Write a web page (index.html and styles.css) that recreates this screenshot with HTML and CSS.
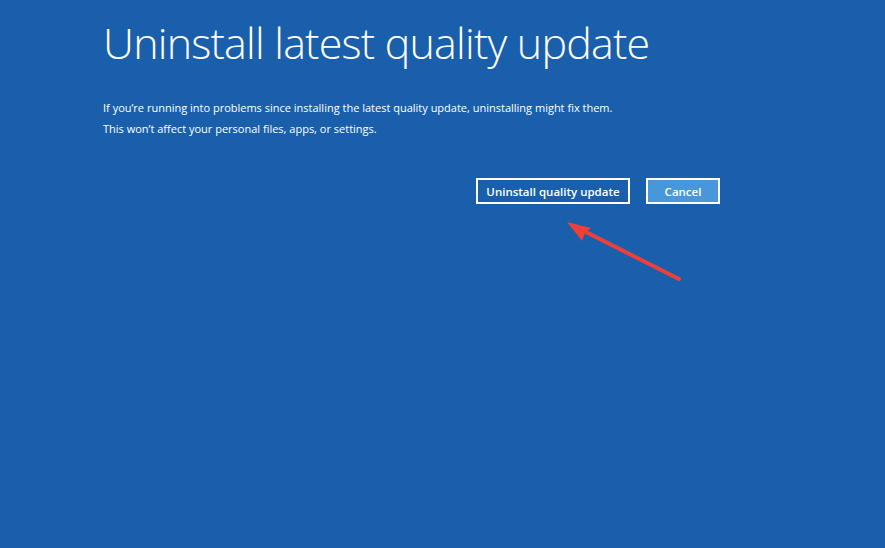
FILE: index.html
```html
<!DOCTYPE html>
<html lang="en">
<head>
<meta charset="utf-8">
<title>Uninstall latest quality update</title>
<link rel="stylesheet" href="styles.css">
</head>
<body>
<main class="page">
  <h1 class="title">Uninstall latest quality update</h1>
  <div class="desc">
    <p>If you’re running into problems since installing the latest quality update, uninstalling might fix them.</p>
    <p>This won’t affect your personal files, apps, or settings.</p>
  </div>
  <div class="actions">
    <button class="btn btn-primary">Uninstall quality update</button>
    <button class="btn btn-cancel">Cancel</button>
  </div>
</main>
<svg class="arrow" width="885" height="548" viewBox="0 0 885 548">
  <line x1="679" y1="279" x2="580" y2="229" stroke="#ee3f3a" stroke-width="4" stroke-linecap="round"/>
  <polygon points="567,222 591,228 585,233 582,241" fill="#ee3f3a"/>
</svg>
</body>
</html>
```
FILE: styles.css
```css
html, body {
  margin: 0;
  padding: 0;
  height: 100%;
}
body {
  background: #1a5fac;
  color: #ffffff;
  font-family: "Open Sans", "Noto Sans", sans-serif;
  overflow: hidden;
}
.page {
  width: 617px;
  padding: 21px 0 0 103px;
  box-sizing: content-box;
}
.title {
  margin: 0;
  font-weight: 300;
  font-size: 43px;
  line-height: 44px;
  letter-spacing: -0.8px;
}
.desc {
  margin-top: 32px;
  font-size: 11px;
  line-height: 21px;
}
.desc p {
  margin: 0;
}
.actions {
  display: flex;
  justify-content: flex-end;
  gap: 16px;
  margin-top: 39px;
}
.btn {
  height: 26px;
  box-sizing: border-box;
  border: 2px solid #ffffff;
  color: #ffffff;
  font-family: "Open Sans", "Noto Sans", sans-serif;
  font-weight: 600;
  font-size: 11.5px;
  padding: 0;
}
.btn-primary {
  width: 154px;
  background: #1a5fac;
}
.btn-cancel {
  width: 74px;
  background: #4897dc;
}
.arrow {
  position: absolute;
  left: 0;
  top: 0;
  pointer-events: none;
}
```
